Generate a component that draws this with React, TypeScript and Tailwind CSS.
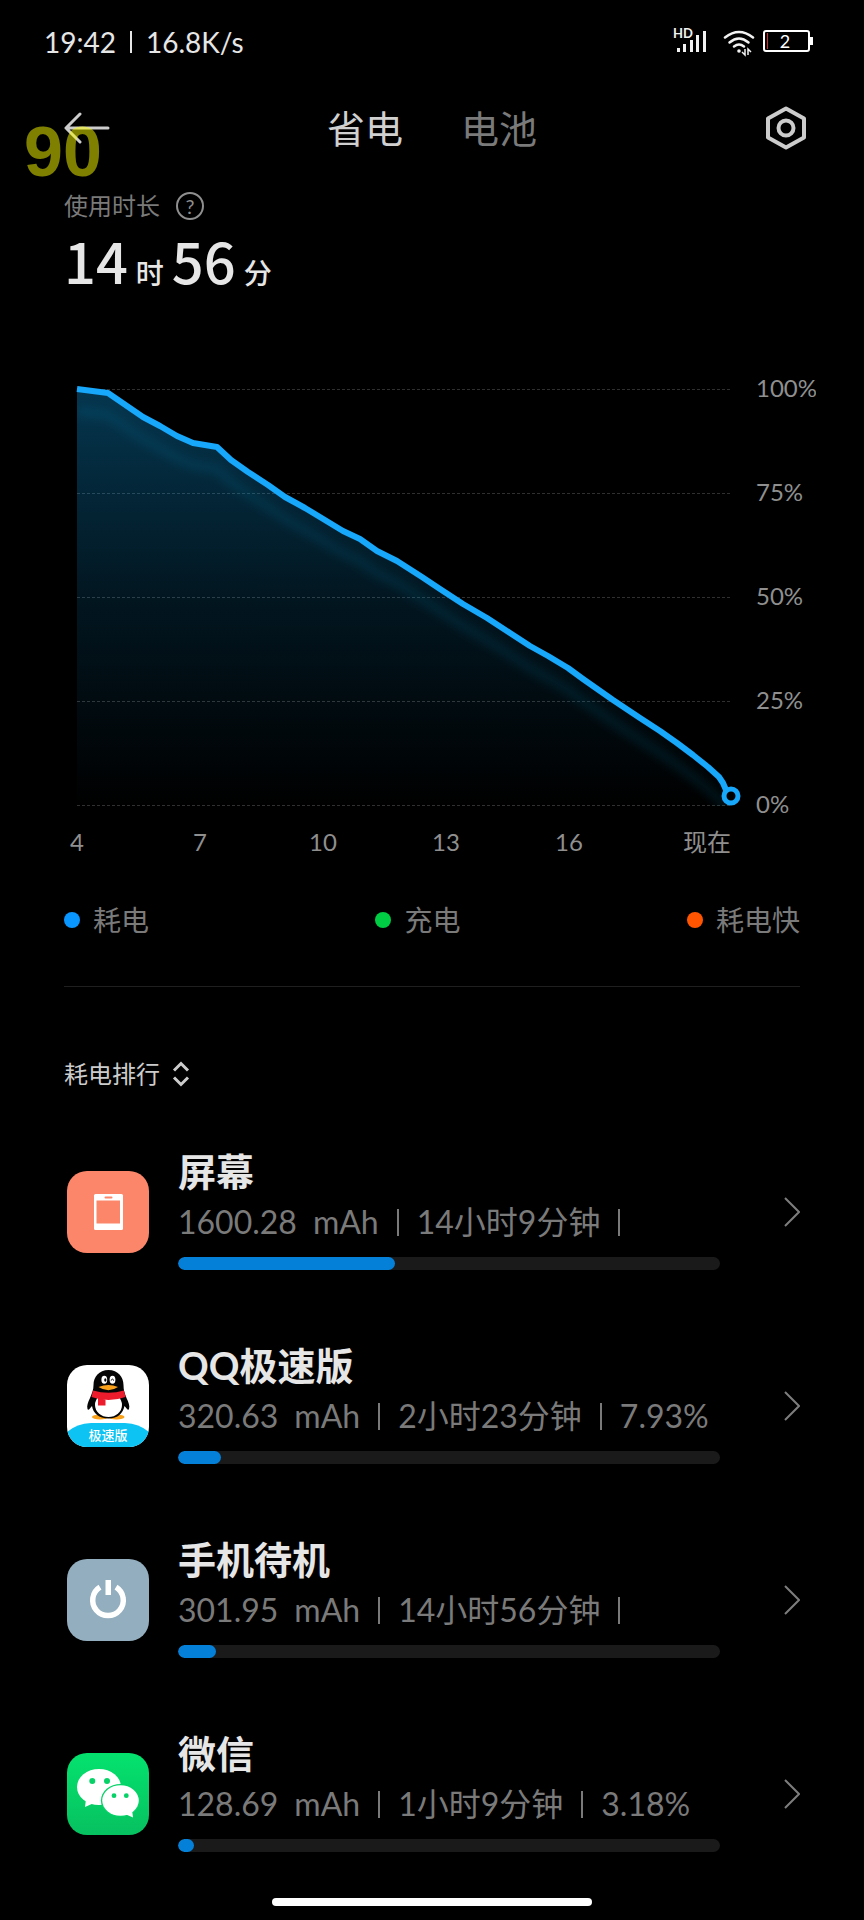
import { useState, type ReactNode } from "react";

const tabs = ["省电", "电池"];

const legend = [
  { label: "耗电", color: "bg-[#0a96ff]" },
  { label: "充电", color: "bg-[#00cc44]" },
  { label: "耗电快", color: "bg-[#ff5500]" },
];

const xTicks = [
  { label: "4", x: 13 },
  { label: "7", x: 136 },
  { label: "10", x: 259 },
  { label: "13", x: 382 },
  { label: "16", x: 505 },
];

const yTicks = [
  { label: "100%", y: 22 },
  { label: "75%", y: 126 },
  { label: "50%", y: 230 },
  { label: "25%", y: 334 },
  { label: "0%", y: 438 },
];

// battery level samples, in chart units
const points = [
  [13, 21], [44, 25], [79, 49], [96, 58], [113, 68], [129, 75], [153, 79],
  [167, 92], [184, 104], [204, 117], [221, 129], [241, 140], [279, 163],
  [296, 171], [313, 183], [333, 193], [358, 209], [376, 221], [399, 236],
  [423, 250], [446, 265], [466, 278], [484, 288], [504, 300], [519, 311],
  [549, 332], [576, 350], [596, 363], [613, 375], [629, 387], [644, 399],
  [655, 409], [659, 415], [662, 422],
];

const linePath = "M" + points.map((p) => p.join(" ")).join("L");
const areaPath = `${linePath}L667 428V438H13Z`;

function ScreenIcon() {
  return (
    <svg viewBox="0 0 82 82" className="size-full bg-[#fb8669]">
      <rect x="27" y="23" width="29" height="36" rx="1.5" fill="#fff" />
      <rect x="29.5" y="29.5" width="23.5" height="23" fill="#fb8669" />
      <rect x="37.5" y="25.5" width="8" height="2" rx="1" fill="#fb8669" />
    </svg>
  );
}

function QQIcon() {
  return (
    <svg viewBox="0 0 82 82" className="size-full bg-white">
      <ellipse cx="33" cy="52" rx="8" ry="2.5" fill="#f9a11b" />
      <ellipse cx="49.5" cy="52" rx="8" ry="2.5" fill="#f9a11b" />
      <path
        d="M41.5 5C32 5 26.500 12 26.500 20C26.500 25 25 28 23 33C21 37 19.500 41 20.500 44C21.200 46 23 43.500 25 41C26 48 32 53.500 41.500 53.500C51 53.500 56 48 57.500 41C59.500 43.500 61.300 46 62 44C63 41 61.500 37 59.500 33C57.500 28 56.500 25 56.500 20C56.500 12 51 5 41.500 5Z"
        fill="#050505"
      />
      <ellipse cx="41.5" cy="40" rx="13.5" ry="12" fill="#fff" />
      <path d="M26 25.500Q41.500 30 57 25.500L58.500 32Q41.500 38 24.500 32Z" fill="#ec1c2d" />
      <path d="M31 33L38.500 34.500V40.500H31Z" fill="#ec1c2d" />
      <ellipse cx="37.3" cy="14.8" rx="2.9" ry="4" fill="#fff" />
      <ellipse cx="45.5" cy="14.8" rx="2.9" ry="4" fill="#fff" />
      <ellipse cx="38.3" cy="15" rx="1.1" ry="1.8" fill="#050505" />
      <path d="M43.800 15.500Q45.500 12.800 47 15.500" fill="none" stroke="#050505" strokeWidth="1" />
      <path d="M31.500 22Q41.500 18 51 22Q41.500 28.500 31.500 22Z" fill="#f9a11b" />
      <path d="M0 67Q10 58.500 24 58H58Q72 58.500 82 67V82H0Z" fill="#0cc3f4" />
      <text x="41" y="75" textAnchor="middle" fontSize="13" fontWeight="500" fill="#fff">
        极速版
      </text>
    </svg>
  );
}

function StandbyIcon() {
  return (
    <svg viewBox="0 0 82 82" className="size-full bg-[#93aebf]">
      <path
        d="M33 28.200A15.300 15.300 0 1 0 49 28.200"
        fill="none"
        stroke="#fff"
        strokeWidth="5.5"
      />
      <rect x="38.5" y="21" width="5.5" height="15" fill="#fff" />
    </svg>
  );
}

function WeChatIcon() {
  return (
    <svg viewBox="0 0 82 82" className="size-full">
      <defs>
        <linearGradient id="wechat" x1="0" y1="0" x2="0" y2="1">
          <stop offset="0" stopColor="#04e26e" />
          <stop offset="1" stopColor="#07c160" />
        </linearGradient>
      </defs>
      <rect width="82" height="82" fill="url(#wechat)" />
      <ellipse cx="32" cy="34" rx="22" ry="18" fill="#fff" />
      <path d="M19 46L18 54L27 50Z" fill="#fff" />
      <ellipse cx="53.5" cy="47.5" rx="19.6" ry="16.6" fill="#06d268" />
      <ellipse cx="53.5" cy="47.5" rx="18.3" ry="15.3" fill="#fff" />
      <path d="M58 61L66 64.500L65 57Z" fill="#fff" />
      <circle cx="25.3" cy="28" r="3" fill="#06d268" />
      <circle cx="40" cy="28" r="3" fill="#06d268" />
      <circle cx="47" cy="42.7" r="2.4" fill="#06d268" />
      <circle cx="59.3" cy="42.7" r="2.4" fill="#06d268" />
    </svg>
  );
}

type Usage = {
  name: string;
  power: string;
  time: string;
  share?: string;
  percent: number;
  icon: ReactNode;
};

const usages: Usage[] = [
  {
    name: "屏幕",
    power: "1600.28",
    time: "14小时9分钟",
    percent: 40,
    icon: <ScreenIcon />,
  },
  {
    name: "QQ极速版",
    power: "320.63",
    time: "2小时23分钟",
    share: "7.93%",
    percent: 8,
    icon: <QQIcon />,
  },
  {
    name: "手机待机",
    power: "301.95",
    time: "14小时56分钟",
    percent: 7,
    icon: <StandbyIcon />,
  },
  {
    name: "微信",
    power: "128.69",
    time: "1小时9分钟",
    share: "3.18%",
    percent: 3,
    icon: <WeChatIcon />,
  },
];

function StatusBar() {
  return (
    <div className="flex h-[84px] items-center justify-between pr-[50px] pl-11 text-[#e6e6e6]">
      <div className="flex items-center gap-3.5 text-[28px] leading-9">
        <span>19:42</span>
        <span className="h-[22px] w-0.5 bg-[#e6e6e6]" />
        <span>16.8K/s</span>
      </div>
      <svg viewBox="0 0 142 32" className="h-8 w-[142px]" fill="#f2f2f2">
        <text x="1" y="12" fontSize="13" fontWeight="700">
          HD
        </text>
        <rect x="5" y="22" width="3" height="4" />
        <rect x="11" y="18" width="3" height="8" />
        <rect x="18" y="14" width="3" height="12" />
        <rect x="24" y="9" width="3" height="17" />
        <rect x="31" y="5" width="3" height="21" />
        <g fill="none" stroke="#f2f2f2" strokeWidth="2.5" strokeLinecap="round">
          <path d="M53 11.500Q67 0.500 81 11.500" />
          <path d="M57.500 16.500Q67 8.500 76.500 16.500" />
          <path d="M62 20.500Q67 16.500 72 20.500" />
        </g>
        <circle cx="67" cy="25" r="1.8" />
        <path d="M73 23V29L70 26M76 29V23L79 26" fill="none" stroke="#f2f2f2" strokeWidth="1.5" />
        <rect x="92" y="5" width="45" height="20" rx="2" fill="none" stroke="#fff" strokeWidth="2" />
        <rect x="95" y="7" width="1" height="16" fill="#d02a2a" />
        <rect x="138" y="11" width="3" height="8" fill="#fff" />
        <text x="113" y="21.5" fontSize="18" textAnchor="middle" fill="#fff">
          2
        </text>
      </svg>
    </div>
  );
}

function BatteryChart() {
  return (
    <svg
      viewBox="0 0 752 492"
      className="mt-[72px] block h-auto w-full"
      fontSize="24"
      fill="#8f8f8f"
      role="img"
      aria-label="电量变化"
    >
      <defs>
        <linearGradient id="area" gradientUnits="userSpaceOnUse" x1="0" y1="21" x2="0" y2="438">
          <stop offset="0" stopColor="#0e9fe8" stopOpacity="0.34" />
          <stop offset="0.5" stopColor="#0e9fe8" stopOpacity="0.14" />
          <stop offset="1" stopColor="#0e9fe8" stopOpacity="0" />
        </linearGradient>
        <filter id="glow" x="-10%" y="-10%" width="120%" height="120%">
          <feGaussianBlur stdDeviation="5" />
        </filter>
        <clipPath id="plot">
          <path d={areaPath} />
        </clipPath>
      </defs>

      {yTicks.map((tick) => (
        <g key={tick.label}>
          <line
            x1="13"
            x2="668"
            y1={tick.y - 0.5}
            y2={tick.y - 0.5}
            stroke="#303030"
            strokeDasharray="3 2"
          />
          <text x="692" y={tick.y + 7}>
            {tick.label}
          </text>
        </g>
      ))}

      <path d={areaPath} fill="url(#area)" />
      <g clipPath="url(#plot)">
        <path
          d={linePath}
          transform="translate(0 22)"
          fill="none"
          stroke="#1790c0"
          strokeOpacity="0.14"
          strokeWidth="9"
          filter="url(#glow)"
        />
      </g>
      <path
        d={linePath}
        fill="none"
        stroke="#17a7fb"
        strokeWidth="6"
        strokeLinejoin="round"
      />
      <circle cx="667" cy="428" r="7" fill="#000" stroke="#17a7fb" strokeWidth="5" />

      {xTicks.map((tick) => (
        <text key={tick.label} x={tick.x} y="483" textAnchor="middle">
          {tick.label}
        </text>
      ))}
      <text x="667" y="483" textAnchor="end">
        现在
      </text>
    </svg>
  );
}

function Separator() {
  return <span className="h-[27px] w-0.5 bg-[#7a7a7a]" />;
}

function UsageRow({ usage }: { usage: Usage }) {
  return (
    <li>
      <button className="flex w-full items-center py-8 pl-[3px] text-left">
        <span className="size-[82px] shrink-0 overflow-hidden rounded-[20px]">
          {usage.icon}
        </span>
        <span className="mr-16 ml-[29px] flex flex-1 flex-col pb-[7px]">
          <span className="text-[38px] leading-[48px] font-bold text-[#e6e6e6]">
            {usage.name}
          </span>
          <span className="mt-[3px] flex items-center gap-[18px] text-[32px] leading-[48px] whitespace-nowrap text-[#7a7a7a]">
            <span className="flex gap-4">
              <span>{usage.power}</span>
              <span>mAh</span>
            </span>
            <Separator />
            <span>{usage.time}</span>
            <Separator />
            {usage.share && <span>{usage.share}</span>}
          </span>
          <span className="mt-[11px] block h-[13px] overflow-hidden rounded-full bg-[#1a1a1a]">
            <span
              className="block h-full rounded-full bg-[#0480d8]"
              style={{ width: `${usage.percent}%` }}
            />
          </span>
        </span>
        <svg viewBox="0 0 16 30" className="h-[30px] w-4 shrink-0">
          <path d="M1 1L15 15L1 29" fill="none" stroke="#7d7d7d" strokeWidth="2" />
        </svg>
      </button>
    </li>
  );
}

export default function App() {
  const [activeTab, setActiveTab] = useState(tabs[0]);

  return (
    <div
      lang="zh-CN"
      className="min-h-screen bg-black pb-3.5 font-['Lato','Noto_Sans_CJK_SC',sans-serif]"
    >
      <StatusBar />

      <header className="relative grid h-[88px] grid-cols-[1fr_auto_1fr] items-center px-[58px]">
        <button aria-label="返回" className="justify-self-start">
          <svg viewBox="0 0 52 32" className="h-8 w-[52px]">
            <path
              d="M22 2L8 16L22 30M8 16H50"
              fill="none"
              stroke="#ccc"
              strokeWidth="3"
              strokeLinecap="round"
              strokeLinejoin="round"
            />
          </svg>
        </button>
        <nav className="flex gap-[58px] text-[38px] leading-[48px]">
          {tabs.map((tab) => (
            <button
              key={tab}
              onClick={() => setActiveTab(tab)}
              className={tab === activeTab ? "text-[#d0d0d0]" : "text-[#7a7a7a]"}
            >
              {tab}
            </button>
          ))}
        </nav>
        <button aria-label="设置" className="justify-self-end">
          <svg viewBox="0 0 40 44" className="h-11 w-10" fill="none" stroke="#ccc" strokeWidth="4">
            <path d="M20 2.500L38 12.500V31.500L20 41.500L2 31.500V12.500Z" strokeLinejoin="round" />
            <circle cx="20" cy="22" r="7.5" />
          </svg>
        </button>
        {/* refresh rate overlay */}
        <span className="absolute top-8 left-6 font-['Liberation_Sans',sans-serif] text-[70px] leading-[72px] font-bold text-[#ffff00] opacity-50">
          90
        </span>
      </header>

      <main>
        <section className="pt-4 pr-12 pl-16">
          <div className="flex items-center gap-4 text-2xl leading-9 text-[#7a7a7a]">
            <h1>使用时长</h1>
            <button
              aria-label="说明"
              className="flex size-7 items-center justify-center rounded-full border-2 border-[#8f8f8f] text-xl leading-6 text-[#8f8f8f]"
            >
              ?
            </button>
          </div>
          <p className="flex items-baseline gap-2 font-['Noto_Sans_CJK_SC',sans-serif] text-[28px] leading-9 font-medium text-[#e6e6e6]">
            <span className="text-[56px] leading-[72px]">14</span>
            <span>时</span>
            <span className="text-[56px] leading-[72px]">56</span>
            <span>分</span>
          </p>
          <BatteryChart />
        </section>

        <section className="px-16">
          <ul className="mt-10 flex justify-between text-[28px] leading-10 text-[#7a7a7a]">
            {legend.map((item) => (
              <li key={item.label} className="flex items-center gap-[13px]">
                <span className={`size-4 rounded-full ${item.color}`} />
                {item.label}
              </li>
            ))}
          </ul>
          <hr className="mt-[46px] border-[#1f1f1f]" />

          <button className="mt-[69px] flex items-center gap-3 text-2xl leading-9 text-[#ccc]">
            耗电排行
            <svg viewBox="0 0 18 26" className="h-[26px] w-[18px]">
              <path
                d="M2 9.500L9 2.500L16 9.500M2 16.500L9 23.500L16 16.500"
                fill="none"
                stroke="#ccc"
                strokeWidth="3"
              />
            </svg>
          </button>

          <ul className="mt-[23px]">
            {usages.map((usage) => (
              <UsageRow key={usage.name} usage={usage} />
            ))}
          </ul>
        </section>
      </main>

      <div className="mx-auto mt-[7px] h-2 w-[37%] rounded-full bg-white" />
    </div>
  );
}
